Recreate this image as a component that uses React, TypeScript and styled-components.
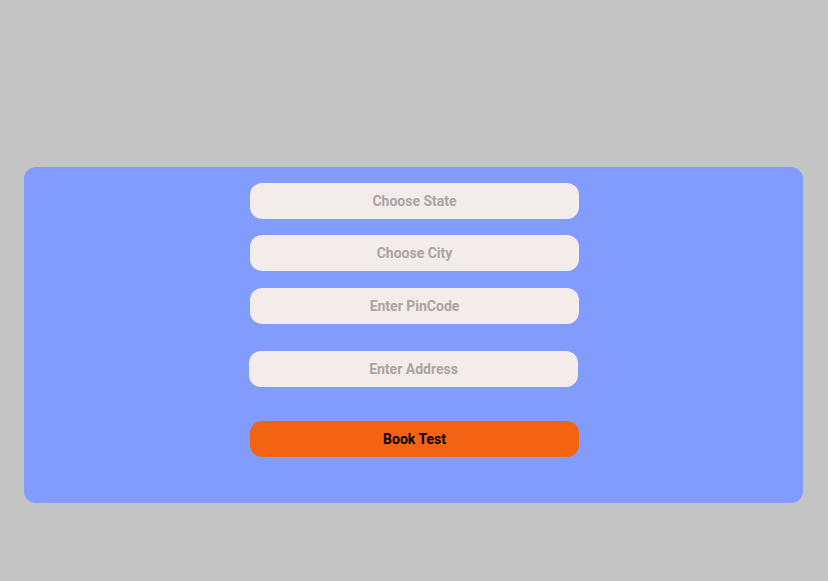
import React from "react";
import styled, { createGlobalStyle } from "styled-components";

const Global = createGlobalStyle`
  html, body { margin: 0; padding: 0; background: #c4c4c4; }
  body { font-family: Roboto, "Liberation Sans", sans-serif; }
  * { box-sizing: border-box; }
`;

const Page = styled.div`
  width: 828px;
  height: 581px;
  padding-top: 167px;
  padding-left: 24px;
`;

const Panel = styled.div`
  width: 779px;
  height: 336px;
  background: #829cfe;
  border-radius: 12px;
  display: flex;
  flex-direction: column;
  align-items: center;
  padding-top: 16px;
`;

const Field = styled.input<{ $gap: number; $shift?: number }>`
  width: 329px;
  height: 36px;
  margin-top: ${(p) => p.$gap}px;
  margin-left: ${(p) => 2 + (p.$shift ?? 0) * 2}px;
  border: none;
  outline: none;
  border-radius: 12px;
  background: #f4ecea;
  font-family: Roboto, "Liberation Sans", sans-serif;
  font-size: 14px;
  font-weight: 700;
  text-align: center;
  color: #333;
  &::placeholder {
    color: #aaa4a3;
  }
`;

const Button = styled.button`
  width: 329px;
  height: 36px;
  margin-top: 34px;
  margin-left: 2px;
  border: none;
  border-radius: 12px;
  background: #f46311;
  color: #000;
  font-family: Roboto, "Liberation Sans", sans-serif;
  font-size: 14px;
  font-weight: 700;
  cursor: pointer;
`;

export default function App() {
  return (
    <>
      <Global />
      <Page>
        <Panel>
          <Field $gap={0} placeholder="Choose State" />
          <Field $gap={16} placeholder="Choose City" />
          <Field $gap={17} placeholder="Enter PinCode" />
          <Field $gap={27} $shift={-1} placeholder="Enter Address" />
          <Button>Book Test</Button>
        </Panel>
      </Page>
    </>
  );
}
